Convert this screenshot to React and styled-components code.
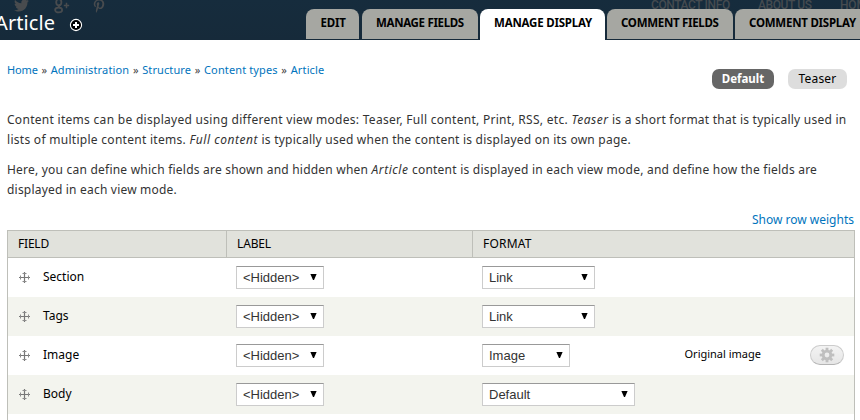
import React from 'react';
import styled, { createGlobalStyle } from 'styled-components';
import { FaTwitter, FaPinterestP } from 'react-icons/fa';

const Global = createGlobalStyle`
  * { box-sizing: border-box; }
  body {
    margin: 0;
    background: #fff;
    color: #000;
    font: 12px/20px "Noto Sans", "Open Sans", sans-serif;
    overflow: hidden;
  }
`;

const Page = styled.div`
  width: 860px;
  height: 420px;
  overflow: hidden;
`;

const Header = styled.header`
  position: relative;
  height: 40px;
  display: flex;
  align-items: flex-start;
  overflow: hidden;
  background: linear-gradient(#162c3d, #162a3a);
`;

const Underlay = styled.div`
  position: absolute;
  inset: 0;
  color: #484b4e;
`;

const Social = styled.span`
  position: absolute;
  left: ${(p) => p.$x}px;
  top: ${(p) => p.$y}px;
  line-height: 0;
`;

const SiteLink = styled.span`
  position: absolute;
  left: ${(p) => p.$x}px;
  top: -3px;
  font: 500 12px/16px Roboto, sans-serif;
  letter-spacing: ${(p) => p.$track}px;
  white-space: nowrap;
  color: #454b50;
`;

const Title = styled.h1`
  position: relative;
  flex: none;
  width: 74px;
  margin: 9px 0 0 -5px;
  color: #fff;
  font-size: 20px;
  font-weight: 400;
  line-height: 28px;
  letter-spacing: 0.1px;
`;

const AddShortcut = styled.span`
  position: relative;
  flex: none;
  width: 14px;
  margin-top: 18px;
  line-height: 0;
`;

const Tabs = styled.nav`
  position: relative;
  flex: none;
  display: flex;
  margin: 9px 0 0 223px;
`;

const Tab = styled.a`
  flex: none;
  width: ${(p) => p.$width}px;
  height: ${(p) => (p.$active ? 31 : 30)}px;
  margin-right: ${(p) => p.$gap}px;
  padding-left: ${(p) => p.$pad}px;
  border-radius: 8px 8px 0 0;
  background: ${(p) => (p.$active ? '#fff' : '#a6a7a2')};
  font-size: 11.5px;
  font-weight: 700;
  line-height: 28px;
  letter-spacing: ${(p) => p.$track}px;
  white-space: nowrap;
`;

const Bar = styled.div`
  height: 50px;
  display: flex;
  justify-content: space-between;
  padding: 20px 13px 0 7px;
`;

const Breadcrumb = styled.div`
  display: flex;
  font-size: 11px;
`;

const Crumb = styled.a`
  color: #0074bd;
  letter-spacing: ${(p) => p.$track}px;
`;

const Separator = styled.span`
  width: 13px;
  text-align: center;
  color: #444;
`;

const Modes = styled.div`
  display: flex;
  gap: 14px;
  padding-top: 9px;
`;

const Mode = styled.a`
  width: ${(p) => p.$width}px;
  height: 20px;
  border-radius: 7px;
  text-align: center;
  line-height: 19px;
  font-size: ${(p) => (p.$active ? 11.5 : 12)}px;
  font-weight: ${(p) => (p.$active ? 700 : 400)};
  color: ${(p) => (p.$active ? '#fff' : '#000')};
  background: ${(p) => (p.$active ? '#666' : '#ddd')};
  letter-spacing: ${(p) => (p.$active ? 0 : 0.2)}px;
`;

const Para = styled.p`
  margin: 0 0 10px;
  padding-left: 7px;
  color: #333;
  white-space: nowrap;
  em { letter-spacing: 0.55px; }
`;

const Help = styled.div`
  padding-top: 20px;
`;

const Run = styled.span`
  letter-spacing: ${(p) => p.$track}px;
`;

const WeightLink = styled.a`
  display: block;
  padding-right: 6px;
  color: #0074bd;
  text-align: right;
`;

const Table = styled.div`
  width: 848px;
  height: 200px;
  margin-left: 7px;
  border: solid #bebfb9;
  border-width: 1px 1px 0;
`;

const Row = styled.div`
  display: grid;
  grid-template-columns: 219px 246px 202px 1fr;
  height: 39px;
  background: ${(p) => (p.$even ? '#f3f4ee' : '#fff')};
`;

const HeadRow = styled(Row)`
  height: 27px;
  border-bottom: 1px solid #bebfb9;
  background: #e1e2dc;
`;

const HeadCell = styled.div`
  padding-left: 10px;
  line-height: 25px;
  letter-spacing: ${(p) => p.$track || 0}px;
  border-right: ${(p) => (p.$line ? '1px solid #bebfb9' : '0')};
`;

const FieldCell = styled.div`
  display: flex;
  align-items: flex-start;
  padding: 9px 0 0 10px;
  gap: 11px;
  svg { margin-top: 4px; }
`;

const Cell = styled.div`
  padding: 8px 0 0 9px;
`;

const Select = styled.div`
  display: flex;
  justify-content: space-between;
  align-items: center;
  width: ${(p) => p.$width}px;
  height: 23px;
  padding: 0 6px;
  border: 1px solid #ccc;
  border-top-color: #999;
  background: #fff;
  color: #333;
  font: 13px/21px "Liberation Sans", Arial, sans-serif;
  svg { margin-bottom: 2px; }
`;

const SummaryCell = styled.div`
  display: flex;
  justify-content: space-between;
  padding: 8px 10px 0 9.5px;
  font-size: 11px;
`;

const GearButton = styled.span`
  display: flex;
  align-items: center;
  justify-content: center;
  width: 34px;
  height: 20px;
  margin-top: 1px;
  border: 1px solid #ccc;
  border-bottom-color: #b4b4b4;
  border-radius: 10px;
  background: linear-gradient(#f3f3f3, #e6e6e6);
`;

const Arrow = () => (
  <svg width="7" height="6" viewBox="0 0 7 6"><path d="M0.4 0h6.2L4 6H3z" fill="#000" /></svg>
);

const DragHandle = () => (
  <svg width="14" height="14" viewBox="0 0 14 14" fill="none" stroke="#777">
    <path d="M6.5 1v11M1 6.5h11" strokeWidth="1.2" />
    <path d="M4.5 2.5h4M4.5 10.5h4M2.5 4.5v4M10.5 4.5v4" stroke="#8c8c8c" />
  </svg>
);

const GPlus = () => (
  <svg width="16" height="16" viewBox="0 0 16 16" fill="none" stroke="currentColor" strokeWidth="1.8">
    <ellipse cx="4.8" cy="4.3" rx="2.6" ry="3.1" />
    <ellipse cx="4.6" cy="12" rx="3.5" ry="2.4" />
    <path d="M4.5 1.2h5M6.6 6.6c-3.2 1.2-2.2 2 .4 3.7" />
    <path d="M9.8 7.5h5.4M12.5 4.8v5.4" strokeWidth="1.5" />
  </svg>
);

const teeth = [0, 45, 90, 135, 180, 225, 270, 315];
const Gear = () => (
  <svg width="16" height="16" viewBox="-8 -8 16 16">
    {teeth.map((a) => (
      <rect key={a} x="-1.4" y="-7.3" width="2.8" height="4" fill="#bfbfbf" transform={`rotate(${a})`} />
    ))}
    <circle r="3.8" fill="none" stroke="#bfbfbf" strokeWidth="2.8" />
  </svg>
);

const tabs = [
  ['EDIT', 53, 3, 14.5, -0.2],
  ['MANAGE FIELDS', 116, 2, 14, -0.32],
  ['MANAGE DISPLAY', 125, 2, 14, -0.2],
  ['COMMENT FIELDS', 126, 2, 14, -0.3],
  ['COMMENT DISPLAY', 140, 0, 14, -0.24],
];

const crumbs = [
  ['Home', -0.15],
  ['Administration', 0.14],
  ['Structure', 0.1],
  ['Content types', 0.12],
  ['Article', 0.15],
];

const rows = [
  ['Section', 'Link', 113],
  ['Tags', 'Link', 113],
  ['Image', 'Image', 88, 'Original image'],
  ['Body', 'Default', 153],
];

export default function App() {
  return (
    <Page>
      <Global />
      <Header>
        <Underlay>
          <Social $x={14} $y={-2}><FaTwitter size={15} /></Social>
          <Social $x={54} $y={-2}><GPlus /></Social>
          <Social $x={92} $y={-1}><FaPinterestP size={14} /></Social>
          <SiteLink $x={651} $track={-0.4}>CONTACT INFO</SiteLink>
          <SiteLink $x={758} $track={-0.4}>ABOUT US</SiteLink>
          <SiteLink $x={840} $track={-0.2}>HOME</SiteLink>
        </Underlay>
        <Title>Article</Title>
        <AddShortcut>
          <svg width="14" height="14" viewBox="0 0 14 14">
            <circle cx="7" cy="7" r="5.6" fill="#000" stroke="#fff" strokeWidth="1.1" />
            <path d="M7 4v6M4 7h6" stroke="#fff" strokeWidth="2" />
          </svg>
        </AddShortcut>
        <Tabs>
          {tabs.map(([label, width, gap, pad, track]) => (
            <Tab key={label} $width={width} $gap={gap} $pad={pad} $track={track} $active={label === 'MANAGE DISPLAY'}>
              {label}
            </Tab>
          ))}
        </Tabs>
      </Header>
      <Bar>
        <Breadcrumb>
          {crumbs.map(([label, track], i) => (
            <React.Fragment key={label}>
              {i > 0 && <Separator>»</Separator>}
              <Crumb $track={track}>{label}</Crumb>
            </React.Fragment>
          ))}
        </Breadcrumb>
        <Modes>
          <Mode $active $width={62}>Default</Mode>
          <Mode $width={59}>Teaser</Mode>
        </Modes>
      </Bar>
      <Help>
        <Para>
          <Run $track={0.29}>Content items can be displayed using different view modes: Teaser, Full content, Print, RSS, etc. </Run>
          <em>Teaser</em>
          <Run $track={0.24}> is a short format that is typically used in</Run>
          <br />
          <Run $track={0.285}>lists of multiple content items. </Run>
          <em>Full content</em>
          <Run $track={0.23}> is typically used when the content is displayed on its own page.</Run>
        </Para>
        <Para>
          <Run $track={0.217}>Here, you can define which fields are shown and hidden when </Run>
          <em>Article</em>
          <Run $track={0.23}> content is displayed in each view mode, and define how the fields are</Run>
          <br />
          <Run $track={0.2}>displayed in each view mode.</Run>
        </Para>
      </Help>
      <WeightLink>Show row weights</WeightLink>
      <Table>
        <HeadRow>
          <HeadCell $line $track={-0.2}>FIELD</HeadCell>
          <HeadCell $line $track={-0.15}>LABEL</HeadCell>
          <HeadCell $track={0.2}>FORMAT</HeadCell>
        </HeadRow>
        {rows.map(([name, format, width, summary], i) => (
          <Row key={name} $even={i % 2 === 1}>
            <FieldCell><DragHandle />{name}</FieldCell>
            <Cell><Select $width={88}>&lt;Hidden&gt;<Arrow /></Select></Cell>
            <Cell><Select $width={width}>{format}<Arrow /></Select></Cell>
            {summary && (
              <SummaryCell>{summary}<GearButton><Gear /></GearButton></SummaryCell>
            )}
          </Row>
        ))}
      </Table>
    </Page>
  );
}
